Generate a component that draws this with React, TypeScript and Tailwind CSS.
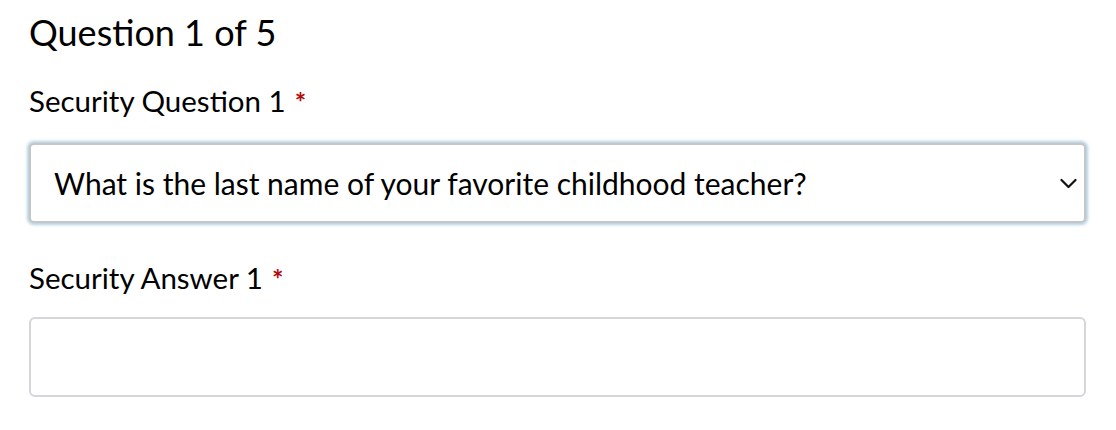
const Chevron = () => (
  <svg width="17" height="11" viewBox="0 0 17 11" fill="none" className="shrink-0">
    <path d="M1.5 2 L8.5 9 L15.5 2" stroke="#111" strokeWidth="2.2" strokeLinecap="round" strokeLinejoin="round" />
  </svg>
)

const Label = ({ children }: { children: React.ReactNode }) => (
  <label className="flex items-start text-[29.5px] leading-[30px] text-black">
    {children}
    <span className="ml-[9px] mt-[1px] text-[27px] font-bold text-[#b50909]">*</span>
  </label>
)

export default function App() {
  return (
    <div className="min-h-[430px] bg-white pl-[29px] pt-[12px] font-['Lato',sans-serif] text-black">
      <h2 className="text-[36px] leading-[40px] text-black">Question 1 of 5</h2>

      <div className="mt-[34px]">
        <Label>Security Question 1</Label>
        <div className="mt-[26px] flex h-[80px] w-[1057px] items-center justify-between rounded-[5px] border-2 border-[#c6c6c6] bg-white pl-[23px] pr-[7px] shadow-[0_0_3px_2px_rgba(120,170,200,0.55)]">
          <span className="text-[30px] leading-none">What is the last name of your favorite childhood teacher?</span>
          <Chevron />
        </div>
      </div>

      <div className="mt-[40px]">
        <Label>Security Answer 1</Label>
        <div className="mt-[23px] h-[80px] w-[1057px] rounded-[6px] border-2 border-[#d4d6da] bg-white" />
      </div>
    </div>
  )
}
